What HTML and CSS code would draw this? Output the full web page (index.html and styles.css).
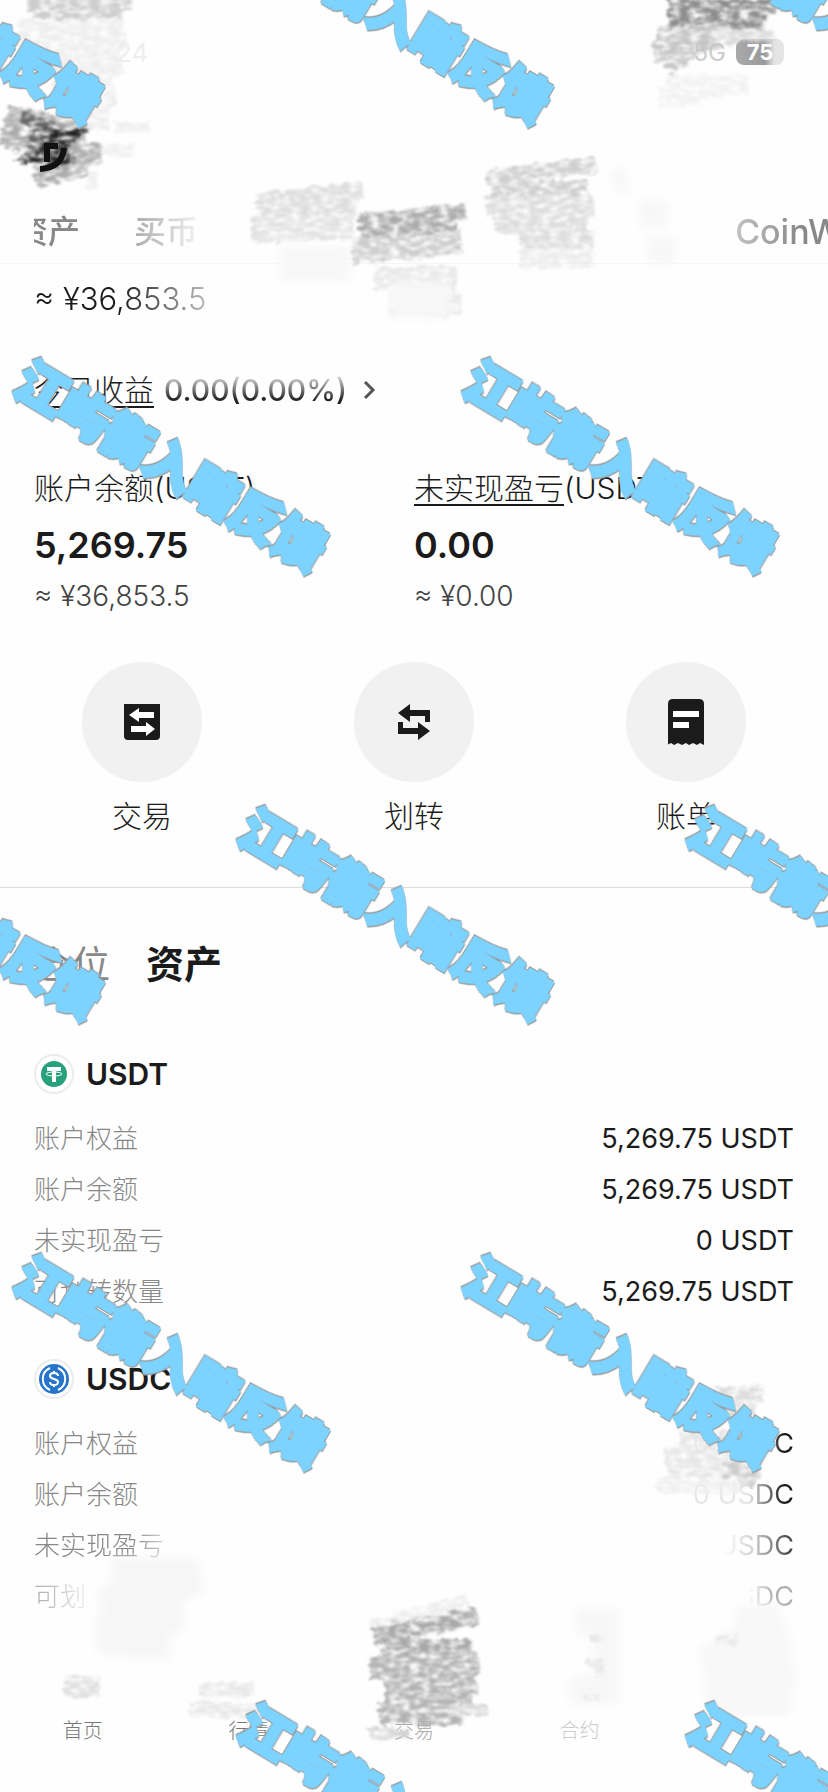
FILE: index.html
```html
<!DOCTYPE html>
<html lang="zh-CN">
<head>
    <meta charset="UTF-8">
    <meta name="viewport" content="width=device-width, initial-scale=1.0">
    <title>资产</title>
    <link rel="stylesheet" href="styles.css">
</head>
<body>
    <div class="page">
        <header>
            <div class="status-bar">
                <span class="clock">24</span>
                <span class="network">5G</span>
                <span class="battery">75</span>
            </div>
            <nav class="top-tabs">
                <a href="#" class="tab-assets">资产</a>
                <a href="#" class="tab-buy">买币</a>
                <a href="#" class="tab-coinw">CoinW</a>
            </nav>
        </header>

        <main>
            <section class="overview">
                <p class="total">≈ ¥36,853.5</p>
                <a href="#" class="pnl">
                    <span class="underlined">今日收益</span>
                    <span class="pnl-value">0.00(0.00%)</span>
                    <svg class="chevron" viewBox="0 0 14 20" fill="none" stroke="#555" stroke-width="3"><path d="M2 2l8 8-8 8"/></svg>
                </a>
                <div class="balances">
                    <div class="balance">
                        <h2>账户余额(USDT)</h2>
                        <p class="amount">5,269.75</p>
                        <p class="approx">≈ ¥36,853.5</p>
                    </div>
                    <div class="balance">
                        <h2><span class="underlined">未实现盈亏</span>(USDT)</h2>
                        <p class="amount">0.00</p>
                        <p class="approx">≈ ¥0.00</p>
                    </div>
                </div>
            </section>

            <section class="actions">
                <button type="button" class="action">
                    <span class="circle">
                        <svg width="38" height="38" viewBox="0 0 38 38">
                            <path fill="#1b1b1b" d="M1 1h36v32q0 4-4 4H5q-4 0-4-4z"/>
                            <path fill="#fff" d="M6 12l10-7v4h15v6H16v4zM32 26l-9-7v4H8v6h15v4z"/>
                        </svg>
                    </span>
                    <span>交易</span>
                </button>
                <button type="button" class="action">
                    <span class="circle">
                        <svg width="38" height="38" viewBox="0 0 38 38" fill="#1b1b1b">
                            <path d="M3 10L15 1v6h20v12h-5v-6H15v6zM35 28l-12 9v-6H3V19h5v6h15v-6z"/>
                        </svg>
                    </span>
                    <span>划转</span>
                </button>
                <button type="button" class="action">
                    <span class="circle">
                        <svg width="36" height="46" viewBox="0 0 36 46">
                            <path fill="#1b1b1b" d="M0 46V5q0-5 5-5h26q5 0 5 5v41l-4-2-3 2-4-2-4 2-3-2-4 2-4-2-4 2-3-2-4 2z"/>
                            <path fill="#fff" d="M5 12h26v6H5zM5 23h16v6H5z"/>
                        </svg>
                    </span>
                    <span>账单</span>
                </button>
            </section>

            <section class="holdings">
                <nav class="section-tabs">
                    <a href="#">仓位</a>
                    <a href="#" class="active">资产</a>
                </nav>

                <div class="coin">
                    <h3>
                        <svg class="coin-icon" viewBox="0 0 40 40">
                            <circle cx="20" cy="20" r="19" fill="#fff" stroke="#ececec" stroke-width="2"/>
                            <circle cx="20" cy="20" r="13" fill="#26a17b"/>
                            <path fill="#fff" d="M13 13h14v4h-5v11h-4V17h-5z"/>
                            <ellipse cx="20" cy="20" rx="8" ry="2" fill="none" stroke="#fff"/>
                        </svg>
                        USDT
                    </h3>
                    <dl>
                        <div><dt>账户权益</dt><dd>5,269.75 USDT</dd></div>
                        <div><dt>账户余额</dt><dd>5,269.75 USDT</dd></div>
                        <div><dt>未实现盈亏</dt><dd>0 USDT</dd></div>
                        <div><dt>可划转数量</dt><dd>5,269.75 USDT</dd></div>
                    </dl>
                </div>

                <div class="coin coin-usdc">
                    <h3>
                        <svg class="coin-icon" viewBox="0 0 40 40" fill="none">
                            <circle cx="20" cy="20" r="19" fill="#fff" stroke="#ececec" stroke-width="2"/>
                            <circle cx="20" cy="20" r="15" fill="#2775ca"/>
                            <path stroke="#fff" stroke-width="2" d="M16 9a12 12 0 0 0 0 22M24 9a12 12 0 0 1 0 22"/>
                            <path stroke="#fff" stroke-width="2" d="M24 17c0-4-8-4-8 0s8 2 8 6-8 4-8 0M20 12v3M20 25v3"/>
                        </svg>
                        USDC
                    </h3>
                    <dl>
                        <div><dt>账户权益</dt><dd>0 USDC</dd></div>
                        <div><dt>账户余额</dt><dd>0 USDC</dd></div>
                        <div><dt>未实现盈亏</dt><dd>0 USDC</dd></div>
                        <div><dt>可划转数量</dt><dd>0 USDC</dd></div>
                    </dl>
                </div>
            </section>
        </main>

        <nav class="bottom-nav">
            <a href="#">首页</a>
            <a href="#">行情</a>
            <a href="#" class="dim">交易</a>
            <a href="#" class="dimmer">合约</a>
            <a href="#" aria-label="资产"></a>
        </nav>

        <!-- pencil scribbles -->
        <svg class="scribbles" width="828" height="1792" viewBox="0 0 828 1792" fill="none" aria-hidden="true">
            <defs>
                <filter id="pencil" x="-20%" y="-20%" width="140%" height="140%">
                    <feTurbulence type="fractalNoise" baseFrequency="0.1 0.22" numOctaves="4" seed="4" result="noise"/>
                    <feColorMatrix in="noise" type="matrix" values="0 0 0 0 0  0 0 0 0 0  0 0 0 0 0  2.4 0 0 0 -0.5" result="grain"/>
                    <feDisplacementMap in="SourceGraphic" in2="noise" scale="10" xChannelSelector="R" yChannelSelector="G" result="rough"/>
                    <feComposite in="rough" in2="grain" operator="in"/>
                    <feGaussianBlur stdDeviation="1"/>
                </filter>
                <filter id="haze" x="-20%" y="-20%" width="140%" height="140%">
                    <feGaussianBlur stdDeviation="5"/>
                </filter>
            </defs>
            <!-- top left -->
            <g filter="url(#pencil)">
                <path stroke="#ccc" stroke-width="16" d="M26 4H132M32 12H122"/>
                <path stroke="#eee" stroke-width="30" d="M18 34H124L30 60H118L60 90H112L60 116H110"/>
                <path stroke="#f0f0f0" stroke-width="12" d="M114 128H150M100 150H134M92 170V190"/>
                <path stroke="#aaa" stroke-width="20" d="M18 108L8 148M24 116L84 134L14 142L100 154L34 166L86 166L36 178"/>
                <path stroke="#666" stroke-width="14" d="M22 116L50 128L26 142L74 136L36 156L76 160"/>
                <path stroke="#222" stroke-width="18" d="M42 138H66L46 154H68L44 162"/>
            </g>
            <path stroke="#111" stroke-width="6" d="M47 162V146H58M40 169Q62 168 64 148"/>
            <!-- tabs row -->
            <g filter="url(#pencil)">
                <path stroke="#ddd" stroke-width="18" d="M256 202L364 190M262 208H356"/>
                <path stroke="#e2e2e2" stroke-width="26" d="M252 230L354 226"/>
                <path stroke="#aaa" stroke-width="16" d="M358 222L466 212M360 230H458"/>
                <path stroke="#ccc" stroke-width="24" d="M352 252L462 242"/>
                <path stroke="#e8e8e8" stroke-width="24" d="M374 278H458M390 304H462"/>
                <path stroke="#cfcfcf" stroke-width="16" d="M488 178L596 164M492 188H588"/>
                <path stroke="#ddd" stroke-width="20" d="M486 206H594L494 224H588M520 240H594"/>
                <path stroke="#ececec" stroke-width="20" d="M520 258H594"/>
            </g>
            <g filter="url(#haze)">
                <path stroke="#f8f8f8" stroke-width="36" d="M280 264H350M390 300H450"/>
                <path stroke="#f7f7f7" stroke-width="26" d="M614 184L626 180M640 214H668M648 248L676 252"/>
            </g>
            <!-- top right -->
            <g filter="url(#pencil)">
                <path stroke="#8c8c8c" stroke-width="14" d="M668 6H776M668 14H768M668 23H764"/>
                <path stroke="#c4c4c4" stroke-width="20" d="M658 36H730L654 52H686L666 68"/>
                <path stroke="#ddd" stroke-width="12" d="M716 36H776"/>
                <path stroke="#f2f2f2" stroke-width="18" d="M666 84H748L660 98H700"/>
            </g>
            <!-- lower right -->
            <g filter="url(#pencil)">
                <path stroke="#ddd" stroke-width="16" d="M714 1394H764M710 1410H756"/>
                <path stroke="#e6e6e6" stroke-width="30" d="M680 1444H760L668 1464H762"/>
                <path stroke="#ccc" stroke-width="20" d="M724 1470H760M732 1478H756"/>
                <path stroke="#f0f0f0" stroke-width="16" d="M656 1486H740"/>
            </g>
            <!-- bottom bar -->
            <g filter="url(#haze)">
                <path stroke="#f6f6f6" stroke-width="36" d="M112 1576L198 1576L104 1606L180 1612L100 1636L170 1642"/>
                <path stroke="#f7f7f7" stroke-width="26" d="M576 1622H606V1690H570"/>
                <path stroke="#f8f8f8" stroke-width="46" d="M736 1630L780 1626L710 1670L790 1664L710 1694L790 1694"/>
            </g>
            <g filter="url(#pencil)">
                <path stroke="#e0e0e0" stroke-width="22" d="M64 1686H100"/>
                <path stroke="#e8e8e8" stroke-width="16" d="M200 1690H254M190 1708L268 1712"/>
                <path stroke="#eee" stroke-width="12" d="M370 1626L468 1600"/>
                <path stroke="#a8a8a8" stroke-width="18" d="M374 1636L478 1616M380 1648H472"/>
                <path stroke="#b2b2b2" stroke-width="22" d="M370 1668L478 1662L386 1684H476L388 1702H472L380 1714H462"/>
                <path stroke="#d4d4d4" stroke-width="12" d="M370 1734H410M450 1710H488"/>
                <path stroke="#e8e8e8" stroke-width="8" d="M590 1638H604M586 1662H600V1676M584 1698H600M714 1640H738"/>
            </g>
        </svg>

        <div class="watermarks" aria-hidden="true">
            <div class="mark-row"><span>江屿衡入暗反馈</span><span>江屿衡入暗反馈</span><span>江屿衡入暗反馈</span></div>
            <div class="mark-row shifted"><span>江屿衡入暗反馈</span><span>江屿衡入暗反馈</span></div>
            <div class="mark-row"><span>江屿衡入暗反馈</span><span>江屿衡入暗反馈</span><span>江屿衡入暗反馈</span></div>
            <div class="mark-row shifted"><span>江屿衡入暗反馈</span><span>江屿衡入暗反馈</span></div>
            <div class="mark-row"><span>江屿衡入暗反馈</span><span>江屿衡入暗反馈</span><span>江屿衡入暗反馈</span></div>
        </div>
    </div>
</body>
</html>
```
FILE: styles.css
```css
* {
    box-sizing: border-box;
}
body {
    margin: 0;
    background-color: #fefefe;
    color: #1b1b1b;
    font-family: Inter, "Noto Sans CJK SC", sans-serif;
}
a {
    color: inherit;
    text-decoration: none;
}
h2, h3, p, dl, dd {
    margin: 0;
    font-weight: 400;
}
.page {
    position: relative;
    overflow: hidden;
}
.status-bar {
    display: flex;
    align-items: center;
    height: 104px;
    margin-bottom: 102px;
    padding: 0 44px 0 116px;
    font-size: 26px;
    color: #eee;
}
.clock {
    flex: 1;
}
.network {
    margin-right: 10px;
    font-size: 24px;
    color: #ccc;
}
.battery {
    width: 48px;
    border-radius: 8px;
    background: linear-gradient(to right, #aaa, #999 60%, #e4e4e4 80%);
    color: #fff;
    font-size: 22px;
    font-weight: 700;
    line-height: 26px;
    text-align: center;
}
.top-tabs {
    display: flex;
    height: 58px;
    padding-left: 16px;
    border-bottom: 1px solid #f6f6f6;
    font-size: 32px;
    font-weight: 500;
    line-height: 52px;
    color: #888;
}
.top-tabs a {
    margin-right: 54px;
}
.tab-assets {
    mask-image: linear-gradient(to right, transparent 28%, #000 28%);
}
.tab-buy {
    mask-image: linear-gradient(to right, rgba(0, 0, 0, .7), rgba(0, 0, 0, .1));
}
.top-tabs .tab-coinw {
    margin: 0 -14px 0 auto;
    font-size: 34px;
    mask-image: linear-gradient(to right, rgba(0, 0, 0, .5), #000 60%);
}
.overview {
    padding: 15px 34px 0;
}
.total {
    width: 190px;
    font-size: 31px;
    font-weight: 300;
    line-height: 40px;
    white-space: nowrap;
    mask-image: linear-gradient(to right, #000 45%, rgba(0, 0, 0, .15));
}
.pnl {
    display: flex;
    align-items: center;
    gap: 10px;
    margin-top: 51px;
    font-size: 30px;
    line-height: 40px;
}
.underlined {
    font-weight: 300;
    text-decoration: underline;
    text-decoration-thickness: 2px;
    text-underline-offset: 5px;
}
.pnl-value {
    font-weight: 500;
    background: linear-gradient(to bottom, #ccc 20%, #222 75%);
    background-clip: text;
    color: transparent;
}
.chevron {
    width: 14px;
    height: 20px;
    margin-left: 6px;
}
.balances {
    display: grid;
    grid-template-columns: 1fr 1fr;
    margin-top: 58px;
}
.balance h2 {
    font-size: 30px;
    font-weight: 300;
    line-height: 40px;
}
.amount {
    margin-top: 15px;
    font-size: 36px;
    font-weight: 600;
    line-height: 44px;
}
.approx {
    margin-top: 13px;
    font-size: 28px;
    font-weight: 300;
    line-height: 32px;
    color: #444;
}
.actions {
    display: grid;
    grid-template-columns: repeat(3, 1fr);
    padding: 50px 6px 51px;
    border-bottom: 1px solid #ddd;
}
.action {
    display: flex;
    flex-direction: column;
    align-items: center;
    gap: 14px;
    padding: 0;
    border: none;
    background: none;
    color: inherit;
    font: 300 30px/40px Inter, "Noto Sans CJK SC", sans-serif;
    cursor: pointer;
}
.circle {
    display: flex;
    align-items: center;
    justify-content: center;
    width: 120px;
    height: 120px;
    border-radius: 50%;
    background-color: #f1f1f1;
}
.holdings {
    padding: 52px 34px 0;
}
.section-tabs {
    display: flex;
    gap: 36px;
    font-size: 38px;
    line-height: 48px;
    color: #888;
}
.section-tabs .active {
    color: #1b1b1b;
    font-weight: 600;
}
.coin {
    margin-top: 66px;
}
.coin-usdc {
    margin-top: 42px;
}
.coin h3 {
    display: flex;
    align-items: center;
    gap: 12px;
    font-size: 30px;
    font-weight: 600;
    line-height: 40px;
}
.coin-icon {
    width: 40px;
    height: 40px;
}
.coin dl {
    margin-top: 19px;
}
.coin dl div {
    display: flex;
    justify-content: space-between;
    font-size: 26px;
    line-height: 51px;
}
.coin dt {
    color: #888;
    font-weight: 300;
}
.coin dd {
    font-size: 27px;
}
.coin-usdc dd {
    mask-image: linear-gradient(to right, rgba(0, 0, 0, .1) 55%, #000 90%);
}
.coin-usdc div:nth-child(3) dt {
    mask-image: linear-gradient(to right, #000 75%, rgba(0, 0, 0, .4));
}
.coin-usdc div:nth-child(3) dd {
    mask-image: linear-gradient(to right, transparent 30%, rgba(0, 0, 0, .2) 60%, rgba(0, 0, 0, .8) 95%);
}
.coin-usdc div:last-child dt {
    mask-image: linear-gradient(to right, rgba(0, 0, 0, .7), rgba(0, 0, 0, .2) 38%, transparent 40%);
}
.coin-usdc div:last-child dd {
    mask-image: linear-gradient(to right, transparent 55%, rgba(0, 0, 0, .35) 80%);
}
.bottom-nav {
    display: grid;
    grid-template-columns: repeat(5, 1fr);
    padding: 95px 0 47px;
    font-size: 20px;
    font-weight: 300;
    line-height: 28px;
    text-align: center;
    color: #777;
}
.bottom-nav .dim {
    color: #aaa;
}
.bottom-nav .dimmer {
    color: #ccc;
}
.scribbles {
    position: absolute;
    top: 0;
    left: 0;
    pointer-events: none;
}
.watermarks {
    position: absolute;
    top: -206px;
    left: 0;
    pointer-events: none;
}
.mark-row {
    display: flex;
    height: 448px;
    margin-left: -279px;
}
.mark-row.shifted {
    margin-left: -54px;
}
.mark-row span {
    flex: none;
    width: 449px;
    transform: rotate(31deg);
    font-size: 50px;
    font-weight: 900;
    line-height: 448px;
    text-align: center;
    white-space: nowrap;
    color: #7dd3ff;
    -webkit-text-stroke: 4px #7dd3ff;
    filter: drop-shadow(1px 1px 0 #999) drop-shadow(-1px -1px 0 #999);
}
```
